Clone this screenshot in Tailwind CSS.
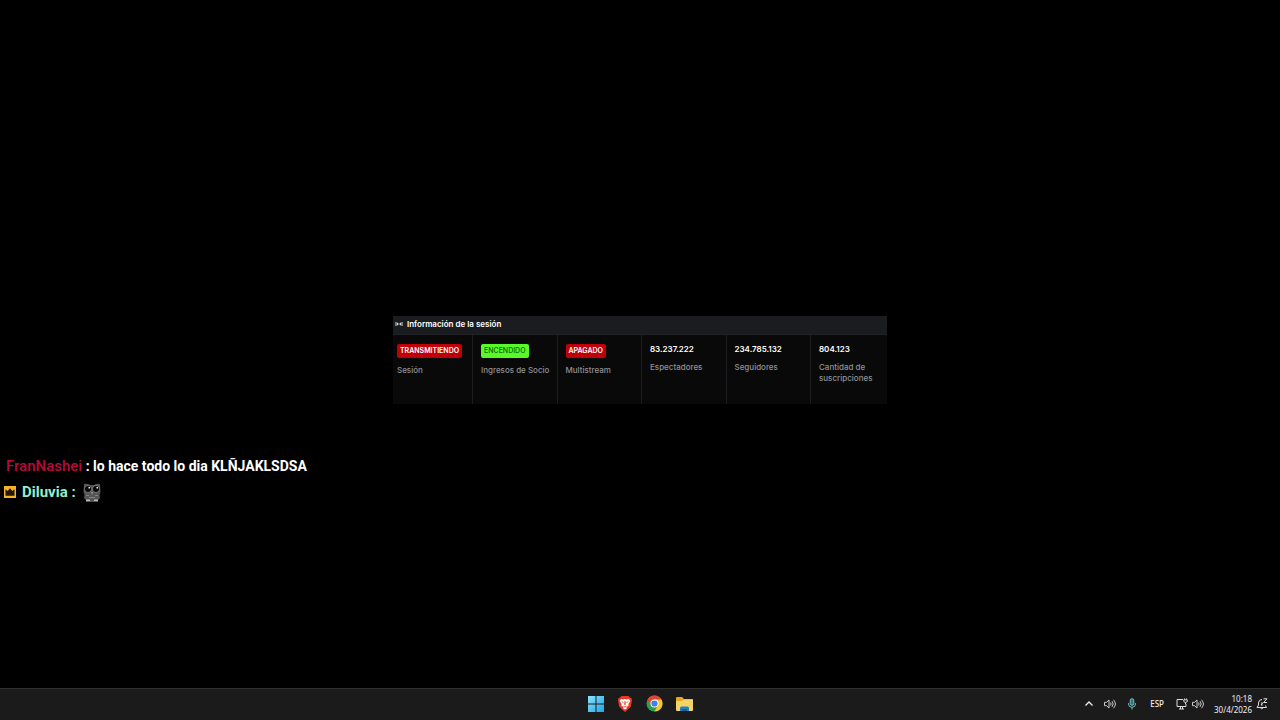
<!DOCTYPE html>
<html lang="es">
<head>
<meta charset="utf-8">
<meta name="viewport" content="width=device-width, initial-scale=1">
<title>Información de la sesión</title>
<script src="https://cdn.jsdelivr.net/npm/@tailwindcss/browser@4"></script>
</head>
<body class="flex min-h-screen flex-col bg-black text-white">
<main class="flex flex-1 flex-col pt-[316px]">
  <section class="mx-auto w-[494px] max-w-full bg-[#090909] font-['Inter',sans-serif] text-[8px] leading-[11px]">
    <header class="flex h-[19px] items-center gap-1 border-b border-[#202225] bg-[#1a1c1f] px-[2px] pb-[2px]">
      <svg class="h-2 w-2" viewBox="0 0 16 16" fill="none" stroke="#d8d8d8" stroke-width="2"><circle cx="8" cy="8" r="1.500" fill="#d8d8d8" stroke="none"/><path d="M2 4v8M5 5.500v5M14 4v8M11 5.500v5"/></svg>
      <h1 class="font-semibold">Información de la sesión</h1>
    </header>
    <dl class="grid h-[69px] grid-cols-[80px_repeat(4,minmax(0,1fr))_76px] font-medium text-[#8f9195]">
      <div class="border-r border-[#1c1d1f] pl-1 pt-[9px]">
        <dd class="flex"><span class="rounded-[2px] bg-[#c00009] px-[3px] py-[2px] text-[7px] leading-[10px] font-semibold text-white">TRANSMITIENDO</span></dd>
        <dt class="mt-[7px]">Sesión</dt>
      </div>
      <div class="border-r border-[#1c1d1f] pl-2 pt-[9px]">
        <dd class="flex"><span class="rounded-[2px] bg-[#58fb27] px-[3px] py-[2px] text-[7px] leading-[10px] font-medium text-[#0e6606]">ENCENDIDO</span></dd>
        <dt class="mt-[7px] whitespace-nowrap">Ingresos de Socio</dt>
      </div>
      <div class="border-r border-[#1c1d1f] pl-2 pt-[9px]">
        <dd class="flex"><span class="rounded-[2px] bg-[#c00009] px-[3px] py-[2px] text-[7px] leading-[10px] font-semibold text-white">APAGADO</span></dd>
        <dt class="mt-[7px]">Multistream</dt>
      </div>
      <div class="border-r border-[#1c1d1f] pl-2 pt-[9px]">
        <dd class="font-semibold text-white">83.237.222</dd>
        <dt class="mt-[7px]">Espectadores</dt>
      </div>
      <div class="border-r border-[#1c1d1f] pl-2 pt-[9px]">
        <dd class="font-semibold text-white">234.785.132</dd>
        <dt class="mt-[7px]">Seguidores</dt>
      </div>
      <div class="pl-2 pt-[9px]">
        <dd class="font-semibold text-white">804.123</dd>
        <dt class="mt-[7px]">Cantidad de suscripciones</dt>
      </div>
    </dl>
  </section>

  <section class="mt-[49px] font-['Roboto',sans-serif] text-[14px] leading-[26px] font-bold" aria-label="Chat">
    <p class="pl-[6px]"><span class="text-[15px] font-medium text-[#b80b3c]">FranNashei</span> : lo hace todo lo dia KLÑJAKLSDSA</p>
    <p class="flex items-center pl-1">
      <svg class="mr-[6px] h-3 w-3" viewBox="0 0 12 12"><path fill="#f5b325" d="M0 0h12v12H0z"/><path fill="#241704" d="M1.500 3.200 3.700 5 6 2.200 8.300 5l2.200-1.800V9.800h-9z"/></svg>
      <span class="text-[15px] text-[#8ff0d2]">Diluvia&nbsp;:</span>
      <svg class="ml-[7px] mt-[2px] h-5 w-[18px]" viewBox="0 0 18 20"><path fill="#555" d="M1 1q3-1 6 1h4q3-2 6-1l.5 8-1 3 .5 3-2 2v2H3v-2l-2-2 .5-3-1-3z"/><circle cx="5" cy="6" r="3.700" fill="#777"/><circle cx="13" cy="6" r="3.700" fill="#777"/><circle cx="5" cy="6" r="3" fill="#080808"/><circle cx="13" cy="6" r="3" fill="#080808"/><path fill="#eee" d="M5.500 4h1.500v1.500H5.500zM13.500 4H15v1.500h-1.500z"/><path fill="#bbb" d="M3 16.500h4V18H3zM11 16.500h4V18h-4z"/><path fill="#999" d="M8 9h2l-1 3z"/><path stroke="#858585" d="M3 12.500h3M12 12.500h3M6 14.500h6"/></svg>
    </p>
  </section>
</main>

<footer class="grid h-8 grid-cols-[1fr_auto_1fr] items-center border-t border-[#303030] bg-[#1b1b1b] pb-[2px] font-['Noto_Sans',sans-serif]">
  <nav class="col-start-2 flex items-center gap-[13px]" aria-label="Aplicaciones">
    <button type="button" aria-label="Inicio" class="block"><svg class="h-4 w-4" viewBox="0 0 16 16"><defs><linearGradient id="win" x2="1" y2="1"><stop stop-color="#8ae3fb"/><stop offset="1" stop-color="#20a5e8"/></linearGradient></defs><path fill="url(#win)" d="M0 0h7.500v7.500H0zM8.500 0H16v7.500H8.500zM0 8.500h7.500V16H0zM8.500 8.500H16V16H8.500z"/></svg></button>
    <button type="button" aria-label="Brave" class="block"><svg class="h-4 w-4" viewBox="0 0 16 16"><path fill="#e83b25" d="m4.500 0h7L13 1.700l1.400.2.600 2.600-1.300 6.200L8 16l-5.700-5.300L1 4.500l.6-2.600L3 1.700z"/><path fill="#fff" d="m4 3 2.500.4L8 3l1.500.4L12 3l1.300 2-1.900 3 .1 1.700L9 11l1.200 1L8 13.500 5.800 12 7 11 4.500 9.700 4.600 8 2.700 5z"/><path fill="#e83b25" d="m4.500 5.200 2.300.7-.8 1zM11.500 5.200l-2.300.7.8 1zM7.600 5h.8l.4 3.200L8 9.400l-.8-1.200zM6 9.500l2 .9 2-.9-2 2.200z"/></svg></button>
    <button type="button" aria-label="Chrome" class="block"><svg class="h-[17px] w-[17px]" viewBox="0 0 18 18"><circle cx="9" cy="9" r="8.500" fill="#2f9e4b"/><path fill="#e34335" d="M1.640 4.750A8.500 8.500 0 0 1 16.360 4.750L9 5 5.500 11z"/><path fill="#f9c72c" d="M16.360 4.750A8.500 8.500 0 0 1 9 17.500L12.500 11 9 4.750z"/><circle cx="9" cy="9" r="4.300" fill="#fff"/><circle cx="9" cy="9" r="3.300" fill="#3f7fe8"/></svg></button>
    <button type="button" aria-label="Explorador de archivos" class="block"><svg class="h-4 w-[17px]" viewBox="0 0 17 16"><path fill="#e4a71c" d="M0 2q0-1 1-1h5l2 2h8q1 0 1 1v9H0z"/><path fill="#f3d468" d="M0 5h6l2-1.500h9V14q0 1-1 1H1q-1 0-1-1z"/><path fill="#247fbd" d="M4 15v-3q0-1.500 1.500-1.500h6Q13 10.500 13 12v3z"/><path fill="#17609a" d="M6 13h5v2H6z"/></svg></button>
  </nav>
  <div class="flex items-center justify-self-end pr-3 text-[8px] leading-[11px] text-[#eee]">
    <button type="button" aria-label="Mostrar iconos ocultos" class="mr-[10px] block"><svg class="h-[10px] w-[10px]" viewBox="0 0 10 10" fill="none" stroke="#eee" stroke-width="1.300"><path d="m1.500 6.500 3.500-3.500 3.500 3.500"/></svg></button>
    <button type="button" aria-label="Sonido" class="mr-[10px] block"><svg class="h-3 w-3" viewBox="0 0 12 12" fill="none" stroke="#ddd" stroke-width=".9"><path d="M.5 4.300h2L5 2v8L2.500 7.700h-2zM6.500 4.500q1.200 1.500 0 3M8 3.200q2.400 2.800 0 5.600M9.500 1.800q3.800 4.200 0 8.400"/></svg></button>
    <button type="button" aria-label="Micrófono" class="mr-3 block"><svg class="h-3 w-3" viewBox="0 0 12 12" fill="none" stroke="#77bec0"><rect x="4.200" y=".7" width="3.600" height="6.600" rx="1.800" fill="#357579"/><path d="M2.500 5v.8a3.500 3.500 0 0 0 7 0V5M6 9.300v2.200"/></svg></button>
    <button type="button" class="mr-3 font-medium">ESP</button>
    <button type="button" aria-label="Red y volumen" class="mr-[10px] flex items-center gap-1"><svg class="h-3 w-3" viewBox="0 0 12 12" fill="none" stroke="#ddd"><path d="M7 1.500H1v7h9V6M3 11h5M4.500 8.500V11M6.500 8.500V11"/><path d="M8.500.5v1M10.500.5v1M7.800 1.800h3.500v1.400q0 1.200-1.750 1.200T7.800 3.200zM9.500 4.500V6"/></svg><svg class="h-3 w-3" viewBox="0 0 12 12" fill="none" stroke="#ddd" stroke-width=".9"><path d="M.5 4.300h2L5 2v8L2.500 7.700h-2zM6.500 4.500q1.200 1.500 0 3M8 3.200q2.400 2.800 0 5.600M9.500 1.800q3.800 4.200 0 8.400"/></svg></button>
    <button type="button" class="mr-1 text-right"><time datetime="2026-04-30T10:18">10:18<br>30/4/2026</time></button>
    <button type="button" aria-label="Notificaciones" class="block"><svg class="h-3 w-3" viewBox="0 0 12 12" fill="none" stroke="#ddd"><path d="M6 1.500Q2.500 1.500 2.500 5v2L1 9.500h9.500L9.500 7.500M4.500 10q1 1.500 2.500 0M7.500.8h3.500L7.500 4.500H11M5 5h1.700L5 7h1.700"/></svg></button>
  </div>
</footer>
</body>
</html>
